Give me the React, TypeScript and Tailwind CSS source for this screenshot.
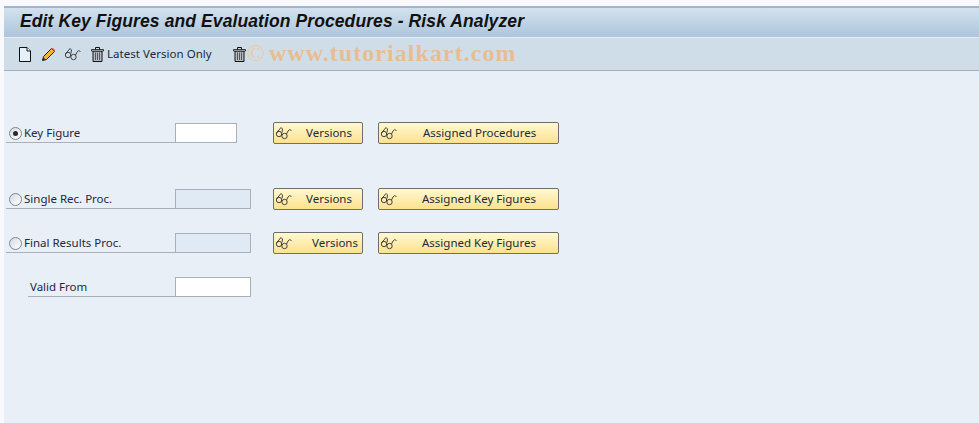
function GlassesIcon({ className = "" }: { className?: string }) {
  return (
    <svg className={className} width="18" height="14" viewBox="0 0 18 14" fill="none" stroke="#333" strokeWidth="0.9">
      <path d="M1.5 7 L6 1.5 L7.5 3 L7 6.5" />
      <ellipse cx="4" cy="8" rx="2.7" ry="2.7" />
      <ellipse cx="9.5" cy="10" rx="2.7" ry="2.7" />
      <path d="M6.5 8.5 L7.5 8.5 M11.5 8 L13 5 Q14.5 2.5 16.5 4.5" />
    </svg>
  );
}

function PageIcon() {
  return (
    <svg width="14" height="15" viewBox="0 0 14 15">
      <path d="M1.5 0.5 H9 L12.5 4 V14.5 H1.5 Z" fill="#e4f0fa" stroke="#111" />
      <path d="M9 0.5 V4 H12.5" fill="#fff" stroke="#111" />
    </svg>
  );
}

function PencilIcon() {
  return (
    <svg width="15" height="15" viewBox="0 0 15 15">
      <path d="M1.5 13.5 L2.5 9.5 L10.5 1.5 L13.5 4.5 L5.5 12.5 Z" fill="#f5b430" stroke="#222" strokeWidth="1" />
      <path d="M10.5 1.5 L13.5 4.5 L14 3 L12 1 Z" fill="#e8506a" />
      <path d="M1.5 13.5 L2.5 10.5 L4.5 12.5 Z" fill="#222" />
    </svg>
  );
}

function TrashIcon() {
  return (
    <svg width="13" height="15" viewBox="0 0 13 15">
      <path d="M2 4 H11 V14.5 H2 Z" fill="#b4bcc6" stroke="#111" />
      <path d="M4.5 5.5 V13 M6.5 5.5 V13 M8.5 5.5 V13" stroke="#555" />
      <path d="M0.5 2.5 H12.5 V4 H0.5 Z" fill="#eef2f6" stroke="#111" strokeWidth="0.8" />
      <path d="M4.5 2.5 V0.5 H8.5 V2.5" fill="none" stroke="#111" />
    </svg>
  );
}

function Radio({ checked }: { checked?: boolean }) {
  return (
    <span className="flex h-[13px] w-[13px] shrink-0 items-center justify-center rounded-full border border-[#7d8791] bg-gradient-to-br from-[#d5dae0] to-white">
      {checked && <span className="h-[5px] w-[5px] rounded-full bg-[#2a2a2a]" />}
    </span>
  );
}

function YellowButton({ label, wide, textClass }: { label: string; wide?: boolean; textClass: string }) {
  return (
    <button className={`flex h-[22px] items-center rounded-[2px] border border-[#6e6e6e] bg-gradient-to-b from-[#fff8d2] to-[#fde28c] pl-[1px] ${wide ? "w-[181px]" : "w-[90px]"}`}>
      <GlassesIcon />
      <span className={`text-[11.5px] leading-[20px] text-[#1c2a3a] ${textClass}`}>{label}</span>
    </button>
  );
}

type RowProps = {
  label: string;
  radio?: boolean;
  checked?: boolean;
  inputClass: string;
  rowClass: string;
  labelClass?: string;
  children?: React.ReactNode;
};

function FormRow({ label, radio, checked, inputClass, rowClass, labelClass = "", children }: RowProps) {
  return (
    <div className={`flex h-[22px] items-center ${rowClass}`}>
      <div className={`flex h-[20px] w-[169px] items-center gap-[2px] border-b border-[#a9b0b8] pt-[1px] pl-[3px] text-[11.5px] text-[#1c2a3a] ${labelClass}`}>
        {radio && <Radio checked={checked} />}
        <span>{label}</span>
      </div>
      <div className={`h-[20px] border border-[#a9b0b8] ${inputClass}`} />
      {children}
    </div>
  );
}

export default function App() {
  return (
    <div className="flex h-[423px] w-[979px] flex-col overflow-hidden bg-[#f8f9fd] pl-[4px] pt-[6px] font-['Noto_Sans','Liberation_Sans',sans-serif]">
      <h1 className="h-[31px] border-t-2 border-[#a3b3c8] bg-gradient-to-b from-[#d2e1ee] to-[#aec5db] pl-[16px] font-['Liberation_Sans',sans-serif] text-[17.5px] leading-[26px] font-bold tracking-[0.1px] text-[#111] italic">
        Edit Key Figures and Evaluation Procedures - Risk Analyzer
      </h1>
      <div className="flex h-[34px] items-center border-t border-b border-t-[#e6edf4] border-b-[#9fb0c4] bg-[#cfdde8] pl-[14px]">
        <PageIcon />
        <span className="ml-[9px]"><PencilIcon /></span>
        <GlassesIcon className="ml-[8px]" />
        <span className="ml-[9px]"><TrashIcon /></span>
        <span className="ml-[3px] text-[11.5px] tracking-[0.03px] text-[#1c2a3a]">Latest Version Only</span>
        <span className="ml-[21px]"><TrashIcon /></span>
        <span className="-mt-[3px] ml-[1px] font-['Liberation_Serif',serif] text-[24px] leading-none text-[#ecc9a6]">©</span>
        <span className="-mt-[3px] ml-[4px] font-['Liberation_Serif',serif] text-[24px] leading-none font-bold tracking-[1.05px] text-[#e9bd92]">www.tutorialkart.com</span>
      </div>
      <main className="flex-1 bg-[#e8eff7] pl-[2px] pt-[51px]">
        <FormRow label="Key Figure" radio checked inputClass="w-[62px] bg-white" rowClass="">
          <div className="ml-[36px] flex gap-[15px]">
            <YellowButton label="Versions" textClass="ml-[13px]" />
            <YellowButton label="Assigned Procedures" wide textClass="ml-[25px]" />
          </div>
        </FormRow>
        <FormRow label="Single Rec. Proc." radio inputClass="w-[76px] bg-[#dfeaf4]" rowClass="mt-[44px]">
          <div className="ml-[22px] flex gap-[15px]">
            <YellowButton label="Versions" textClass="ml-[13px]" />
            <YellowButton label="Assigned Key Figures" wide textClass="ml-[24px]" />
          </div>
        </FormRow>
        <FormRow label="Final Results Proc." radio inputClass="w-[76px] bg-[#dfeaf4]" rowClass="mt-[22px]">
          <div className="ml-[22px] flex gap-[15px]">
            <YellowButton label="Versions" textClass="ml-[19px]" />
            <YellowButton label="Assigned Key Figures" wide textClass="ml-[24px]" />
          </div>
        </FormRow>
        <FormRow label="Valid From" inputClass="w-[76px] bg-white" rowClass="mt-[22px] pl-[22px]" labelClass="!w-[147px] !pl-[2px]" />
      </main>
    </div>
  );
}
